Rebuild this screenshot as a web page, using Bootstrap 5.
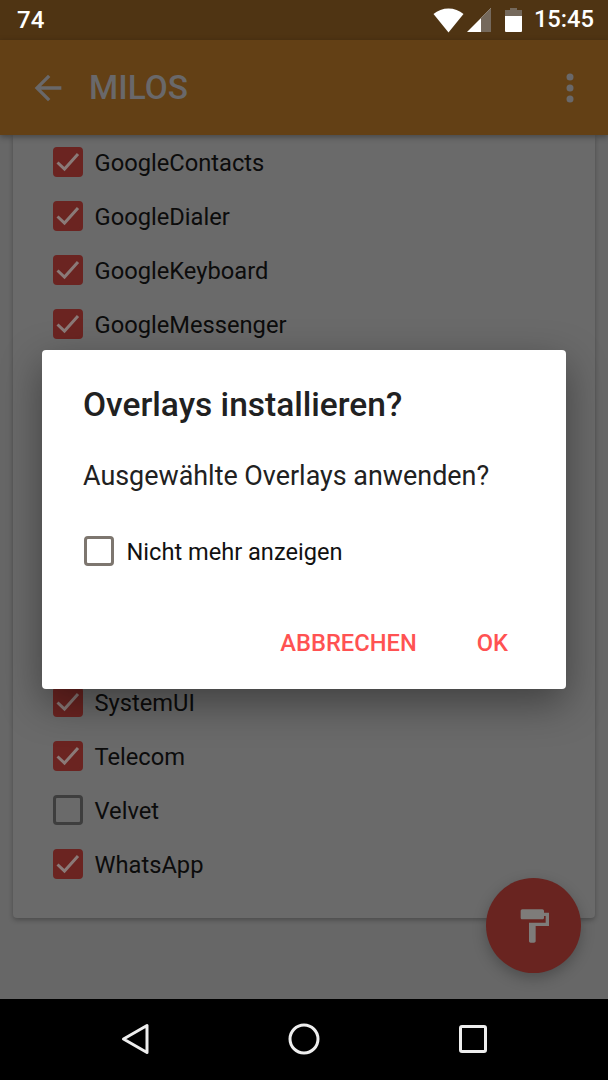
<!DOCTYPE html>
<html lang="de">
<head>
<meta charset="utf-8">
<title>Milos</title>
<link href="https://cdn.jsdelivr.net/npm/bootstrap@5.3.0/dist/css/bootstrap.min.css" rel="stylesheet">
<style>
html,body{height:100%;}
body{font-family:Roboto,"Liberation Sans",sans-serif;background:#676767;overflow:hidden;}
.screen{width:608px;height:1080px;}
.statusbar{height:40px;background:#4f3413;color:#fff;font-weight:500;font-size:24px;padding:0 14px 0 17px;line-height:1;}
.status-time{font-size:23.700px;margin-left:12px;}
.wifi-glyph{margin-right:3px;}
.signal-glyph{margin-right:14px;}
.appbar{height:95px;background:#634015;color:#69686a;position:relative;z-index:2;box-shadow:0 2px 6px rgba(0,0,0,.35);padding:0 34px 0 28px;}
.appbar-title{font-size:33.400px;font-weight:500;margin-left:21px;line-height:1;}
.stage{position:relative;flex:1 1 auto;min-height:0;}
.sheet{margin:0 13px;background:#6a6a6a;border-radius:0 0 4px 4px;padding-bottom:27px;box-shadow:0 2px 5px rgba(0,0,0,.28);}
.pick-row{height:54px;padding-left:40px;gap:11.500px;color:#0c0c0c;font-size:23.700px;}
.pick-row label{margin:0;padding-top:4px;}
.hidden-rows{height:324px;}
.form-check-input.tick{width:30px;height:30px;margin:0;flex:none;border-radius:4px;background-color:transparent;border:3px solid #3e3e3e;box-shadow:none;}
.form-check-input.tick:checked{background-color:#6b2421;border-color:#6b2421;background-size:24px 24px;background-image:url("data:image/svg+xml,%3csvg xmlns='http://www.w3.org/2000/svg' viewBox='0 0 24 24'%3e%3cpath fill='none' stroke='%238a7a78' stroke-width='3' d='M1.5 12.5l7 6.5L22 4'/%3e%3c/svg%3e");}
.scrim-dialog{position:absolute;left:42px;top:215px;width:524px;height:339px;background:#fff;border-radius:4px;box-shadow:0 14px 40px rgba(0,0,0,.4);padding:0 41px;z-index:3;}
.dlg-title{font-size:33.500px;font-weight:500;color:#212121;line-height:36px;margin:37px 0 0;}
.dlg-body{font-size:26.900px;color:#212121;line-height:30px;margin:38px 0 0;}
.dlg-check{margin-top:41px;gap:12.500px;color:#111;font-size:23.600px;padding-left:1px;}
.dlg-check label{margin:0;padding-top:3px;}
.dlg-check .form-check-input.tick{border-color:#7d766f;}
.dlg-actions{position:absolute;right:58px;bottom:32px;gap:60px;}
.dlg-btn{background:none;border:0;padding:0;color:#ff5252;font-size:23.700px;font-weight:500;line-height:27px;}
.fab-paint{position:absolute;left:486px;top:743px;width:95px;height:95px;border-radius:50%;background:#692420;box-shadow:0 5px 14px rgba(0,0,0,.25);z-index:1;}
.navbar-bottom{height:81px;background:#000;position:relative;z-index:4;}
</style>
</head>
<body>
<div class="screen d-flex flex-column">
  <div class="statusbar d-flex align-items-center justify-content-between">
    <span>74</span>
    <div class="d-flex align-items-center">
      <svg width="31" height="25" viewBox="0 0 31 25" class="wifi-glyph"><path fill="#fff" d="M15.500 24.500L.5 6C4.500 2.500 10 .5 15.500 .5S26.500 2.500 30.500 6z"/></svg>
      <svg width="24" height="24" viewBox="0 0 24 24" class="signal-glyph"><path fill="#fff" d="M0 24L24 0v24z"/><path fill="#75695c" d="M14 10L24 0v24H14z"/></svg>
      <svg width="17" height="24" viewBox="0 0 17 24"><path fill="#75695c" d="M5 0h7v2h5v7H0V2h5z"/><path fill="#fff" d="M0 8h17v15a1 1 0 0 1-1 1H1a1 1 0 0 1-1-1z"/></svg>
      <span class="status-time">15:45</span>
    </div>
  </div>
  <div class="appbar d-flex align-items-center">
    <svg width="40" height="40" viewBox="0 0 24 24"><path fill="#69686a" d="M20 11H7.830l5.590-5.590L12 4l-8 8 8 8 1.410-1.410L7.830 13H20v-2z"/></svg>
    <span class="appbar-title">MILOS</span>
    <svg class="ms-auto" width="8" height="30" viewBox="0 0 8 30"><circle cx="4" cy="4" r="3.500" fill="#69686a"/><circle cx="4" cy="15" r="3.500" fill="#69686a"/><circle cx="4" cy="26" r="3.500" fill="#69686a"/></svg>
  </div>
  <div class="stage">
    <div class="sheet">
      <div class="pick-row d-flex align-items-center"><input class="form-check-input tick" type="checkbox" id="c1" checked><label for="c1">GoogleContacts</label></div>
      <div class="pick-row d-flex align-items-center"><input class="form-check-input tick" type="checkbox" id="c2" checked><label for="c2">GoogleDialer</label></div>
      <div class="pick-row d-flex align-items-center"><input class="form-check-input tick" type="checkbox" id="c3" checked><label for="c3">GoogleKeyboard</label></div>
      <div class="pick-row d-flex align-items-center"><input class="form-check-input tick" type="checkbox" id="c4" checked><label for="c4">GoogleMessenger</label></div>
      <div class="hidden-rows"></div>
      <div class="pick-row d-flex align-items-center"><input class="form-check-input tick" type="checkbox" id="c5" checked><label for="c5">SystemUI</label></div>
      <div class="pick-row d-flex align-items-center"><input class="form-check-input tick" type="checkbox" id="c6" checked><label for="c6">Telecom</label></div>
      <div class="pick-row d-flex align-items-center"><input class="form-check-input tick" type="checkbox" id="c7"><label for="c7">Velvet</label></div>
      <div class="pick-row d-flex align-items-center"><input class="form-check-input tick" type="checkbox" id="c8" checked><label for="c8">WhatsApp</label></div>
    </div>
    <div class="fab-paint d-flex align-items-center justify-content-center">
      <svg width="40" height="40" viewBox="0 0 24 24"><path fill="#7e7c7a" d="M18 4V3c0-.55-.45-1-1-1H5c-.55 0-1 .45-1 1v4c0 .55.45 1 1 1h12c.55 0 1-.45 1-1V6h1v4H9v11c0 .55.45 1 1 1h2c.55 0 1-.45 1-1v-9h8V4h-3z"/></svg>
    </div>
    <div class="scrim-dialog">
      <h2 class="dlg-title">Overlays installieren?</h2>
      <p class="dlg-body">Ausgewählte Overlays anwenden?</p>
      <div class="dlg-check d-flex align-items-center"><input class="form-check-input tick" type="checkbox" id="c9"><label for="c9">Nicht mehr anzeigen</label></div>
      <div class="dlg-actions d-flex">
        <button type="button" class="dlg-btn">ABBRECHEN</button>
        <button type="button" class="dlg-btn">OK</button>
      </div>
    </div>
  </div>
  <div class="navbar-bottom d-flex">
    <svg width="608" height="81" viewBox="0 0 608 81"><path fill="none" stroke="#eee" stroke-width="3" stroke-linejoin="round" d="M123.500 40L147 26.500v27z"/><circle cx="304" cy="40" r="14" fill="none" stroke="#eee" stroke-width="3"/><rect x="460.500" y="27.500" width="25" height="25" rx="1.500" fill="none" stroke="#eee" stroke-width="3"/></svg>
  </div>
</div>
<script src="https://cdn.jsdelivr.net/npm/bootstrap@5.3.0/dist/js/bootstrap.bundle.min.js"></script>
</body>
</html>
